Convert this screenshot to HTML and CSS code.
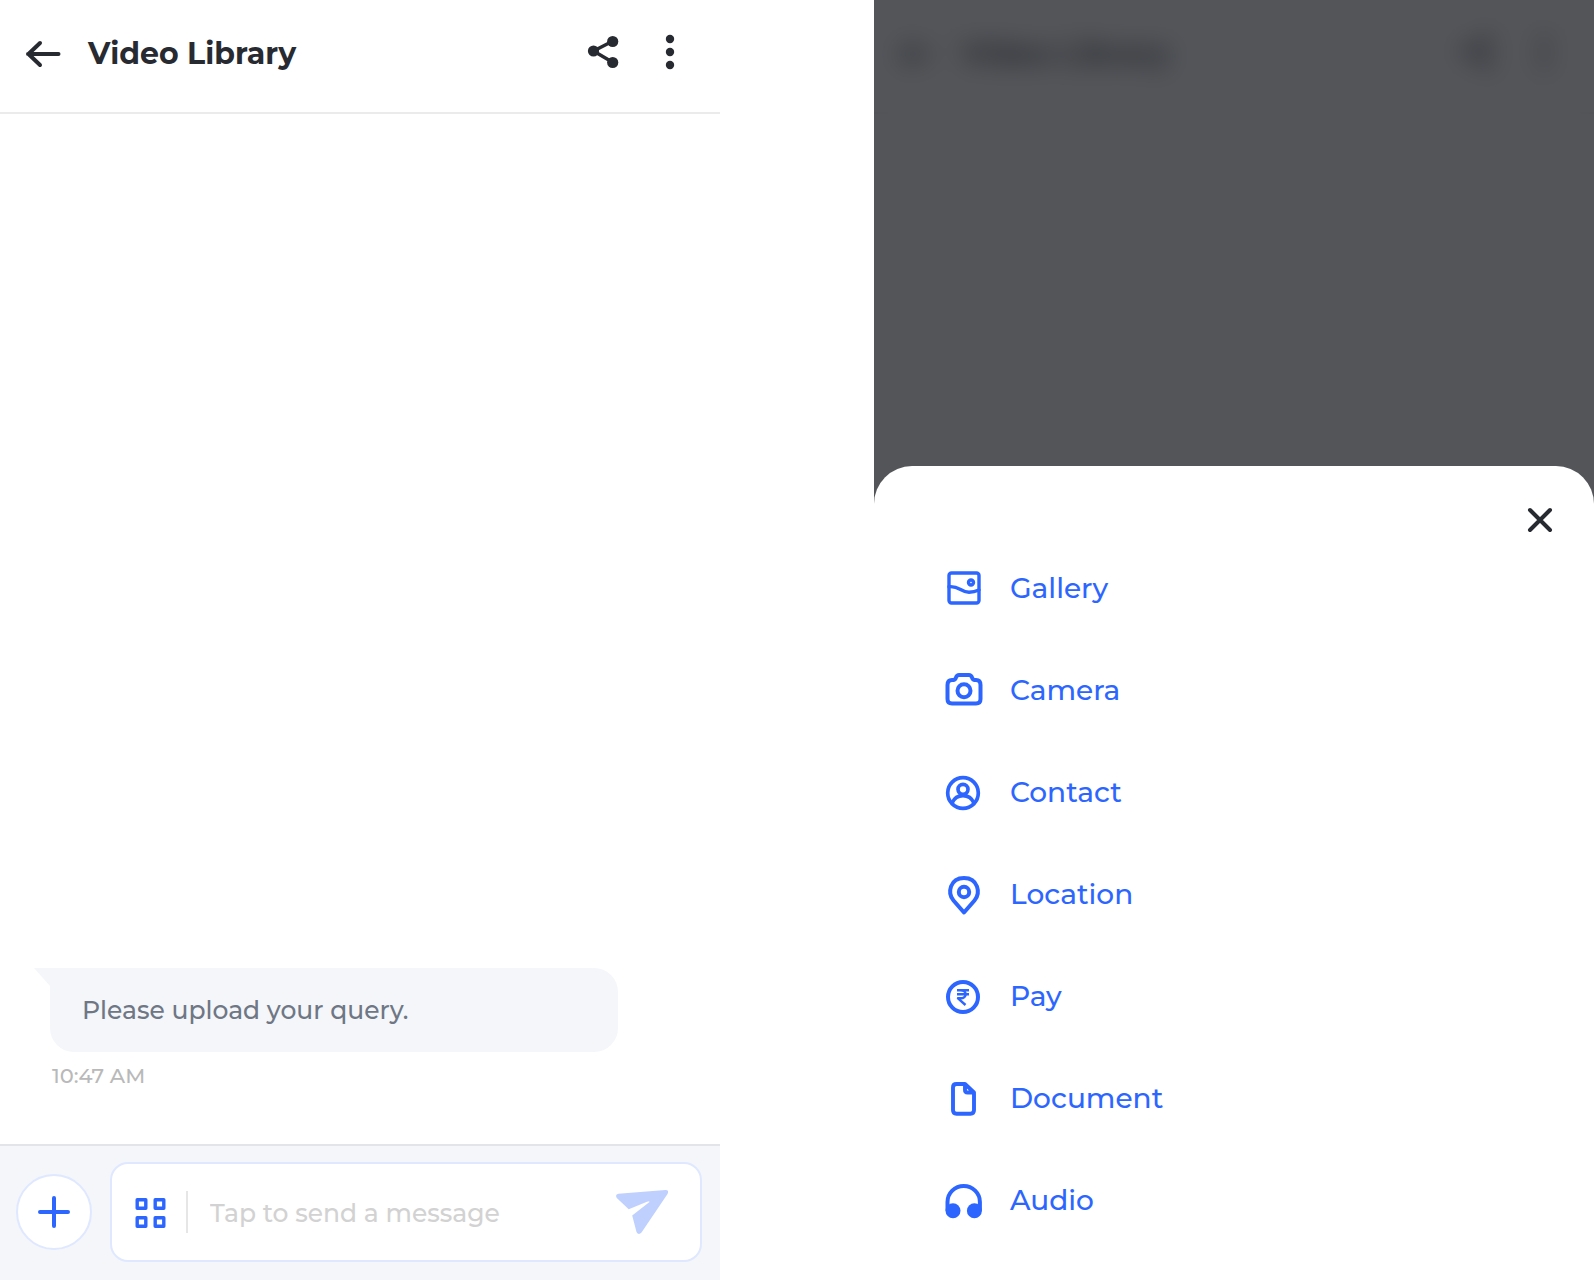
FILE: index.html
```html
<!DOCTYPE html>
<html lang="en">
<head>
  <meta charset="utf-8">
  <meta name="viewport" content="width=device-width, initial-scale=1">
  <title>Video Library</title>
  <link rel="stylesheet" href="styles.css">
</head>
<body>
  <main class="screens">
    <section class="screen chat" aria-label="Chat">
      <header class="topbar">
        <button class="icon-button" type="button" aria-label="Back">
          <svg class="icon" viewBox="0 0 40 40"><path d="M34.500 20H4M16 9L4.500 20L16 31" stroke-width="4"/></svg>
        </button>
        <h1 class="title">Video Library</h1>
        <div class="actions">
          <button class="icon-button" type="button" aria-label="Share">
            <svg class="icon" viewBox="0 0 40 40"><path d="M10.500 19L30 9M10.500 19L30 30.500" stroke-width="3.500"/><g class="solid"><circle cx="10.500" cy="19" r="5.600"/><circle cx="29.700" cy="9.500" r="5.600"/><circle cx="29.700" cy="30.500" r="5.600"/></g></svg>
          </button>
          <button class="icon-button" type="button" aria-label="More options">
            <svg class="icon" viewBox="0 0 40 40"><g class="solid"><circle cx="20" cy="7" r="4.200"/><circle cx="20" cy="20" r="4.200"/><circle cx="20" cy="33" r="4.200"/></g></svg>
          </button>
        </div>
      </header>

      <div class="messages">
        <article class="message">
          <p class="bubble">Please upload your query.</p>
          <time class="time" datetime="10:47">10:47 AM</time>
        </article>
      </div>

      <form class="composer">
        <button class="add" type="button" aria-label="Add attachment">
          <svg class="icon" viewBox="0 0 40 40"><path d="M20 6V34M6 20H34" stroke-width="4"/></svg>
        </button>
        <div class="field">
          <button class="icon-button accent" type="button" aria-label="Shortcuts">
            <svg class="icon" viewBox="0 0 40 40"><path d="M7.200 7.700h8.600v8.600h-8.600zM25.200 7.700h8.600v8.600h-8.600zM7.200 25.700h8.600v8.600h-8.600zM25.200 25.700h8.600v8.600h-8.600z" stroke-width="3.400"/></svg>
          </button>
          <input class="input" type="text" placeholder="Tap to send a message" aria-label="Message">
          <button class="send" type="submit" aria-label="Send">
            <svg viewBox="0 0 52 44"><path d="M2.500 3.700L49.500 0Q53.500 0 51.500 4L25.500 42.500Q22.500 45.500 20.500 42L16.200 25.500L33.500 12Q33.500 10.700 31 11.800L12.700 19.300L.8 8Q-1.300 4.500 2.500 3.700Z" fill="currentColor"/></svg>
          </button>
        </div>
      </form>
    </section>

    <section class="screen attach" aria-label="Attachments">
      <div class="topbar" aria-hidden="true">
        <span class="icon-button"><svg class="icon" viewBox="0 0 40 40"><path d="M34.500 20H4M16 9L4.500 20L16 31" stroke-width="4"/></svg></span>
        <span class="title">Video Library</span>
        <div class="actions">
          <span class="icon-button"><svg class="icon" viewBox="0 0 40 40"><path d="M10.500 19L30 9M10.500 19L30 30.500" stroke-width="3.500"/><g class="solid"><circle cx="10.500" cy="19" r="5.600"/><circle cx="29.700" cy="9.500" r="5.600"/><circle cx="29.700" cy="30.500" r="5.600"/></g></svg></span>
          <span class="icon-button"><svg class="icon" viewBox="0 0 40 40"><g class="solid"><circle cx="20" cy="7" r="4.200"/><circle cx="20" cy="20" r="4.200"/><circle cx="20" cy="33" r="4.200"/></g></svg></span>
        </div>
      </div>

      <div class="overlay">
        <div class="sheet" role="dialog" aria-label="Attach">
          <button class="close" type="button" aria-label="Close">
            <svg class="icon" viewBox="3 3 34 34"><path d="M10 10L30 30M30 10L10 30" stroke-width="4"/></svg>
          </button>
          <ul class="options">
            <li><button class="option" type="button">
              <svg class="icon" viewBox="0 0 40 40" stroke-width="3.400"><rect x="5" y="5" width="30" height="30" rx="2.500"/><circle cx="27" cy="14.500" r="2.500"/><path d="M5 18.700C15 17.500 17 24.300 25 24.300Q30 24.300 35 22"/></svg>
              Gallery</button></li>
            <li><button class="option" type="button">
              <svg class="icon" viewBox="0 0 40 40" stroke-width="4"><path d="M8 10H9.500Q11 10 12 7.500Q13 5 15 5H25Q27 5 28 7.500Q29 10 30.500 10H32Q36.500 10 36.500 15V29Q36.500 33.500 32 33.500H8Q3.500 33.500 3.500 29V15Q3.500 10 8 10Z"/><circle cx="20" cy="20.700" r="6.500"/></svg>
              Camera</button></li>
            <li><button class="option" type="button">
              <svg class="icon" viewBox="0 0 40 40" stroke-width="3.700"><circle cx="19" cy="21" r="15.300"/><circle cx="19" cy="17.300" r="5"/><path d="M8 31C12.500 21.200 25.500 21.200 30 31"/></svg>
              Contact</button></li>
            <li><button class="option" type="button">
              <svg class="icon" viewBox="0 0 40 40" stroke-width="4"><path d="M20 38.500L9.500 26.500C3 19 6 4 20 4S37 19 30.500 26.500Z"/><circle cx="20" cy="18" r="5.200"/></svg>
              Location</button></li>
            <li><button class="option" type="button">
              <svg class="icon" viewBox="0 0 40 40"><circle cx="19" cy="21" r="15" stroke-width="4"/><path class="square" d="M13 14.300H25M13 18.300H25M13 14.300H16.500C23.500 14.300 23.500 22.300 16.500 22.300H14L21.500 29" stroke-width="2.400"/></svg>
              Pay</button></li>
            <li><button class="option" type="button">
              <svg class="icon" viewBox="0 0 40 40" stroke-width="3.900"><path d="M12.500 6H21L30 14.500V32Q30 35.700 26.500 35.700H12.500Q9 35.700 9 32V9.500Q9 6 12.500 6ZM21 6.500V12Q21 14.500 23.500 14.500H29.500"/></svg>
              Document</button></li>
            <li><button class="option" type="button">
              <svg class="icon" viewBox="0 0 40 40"><path d="M3.500 30V22A16.200 16 0 0 1 35.900 22V30" stroke-width="4"/><g class="solid"><circle cx="9" cy="30.700" r="7.500"/><circle cx="30.400" cy="30.700" r="7.500"/></g></svg>
              Audio</button></li>
          </ul>
        </div>
      </div>
    </section>
  </main>
</body>
</html>
```
FILE: styles.css
```css
* {
  box-sizing: border-box;
}

body {
  margin: 0;
  background: #fff;
  color: #282a31;
  font-family: Montserrat, Inter, "Open Sans", sans-serif;
  font-weight: 500;
}

button,
input {
  margin: 0;
  padding: 0;
  border: 0;
  background: none;
  color: inherit;
  font: inherit;
}

button {
  cursor: pointer;
}

.screens {
  display: grid;
  grid-template-columns: 720fr 720fr;
  column-gap: 9.66%;
  min-height: 100vh;
}

.screen {
  min-width: 0;
}

.chat {
  display: flex;
  flex-direction: column;
}

.icon {
  display: block;
  flex: none;
  width: 40px;
  height: 40px;
  overflow: visible;
  fill: none;
  stroke: currentColor;
  stroke-linecap: round;
  stroke-linejoin: round;
}

.icon .solid {
  fill: currentColor;
  stroke: none;
}

.icon .square {
  stroke-linecap: butt;
}

.icon-button {
  flex: none;
  width: 40px;
  height: 40px;
}

.topbar {
  display: flex;
  align-items: center;
  height: 114px;
  padding: 0 30px 4px 24px;
  border-bottom: 2px solid #ebebeb;
}

.title {
  flex: 1;
  margin: 0 0 0 24px;
  font-size: 30px;
  font-weight: 700;
  line-height: 40px;
}

.actions {
  display: flex;
  gap: 27px;
  padding-bottom: 4px;
}

.messages {
  display: flex;
  flex: 1;
  flex-direction: column;
  justify-content: flex-end;
  padding: 0 102px 54px 50px;
}

.bubble {
  position: relative;
  margin: 0;
  padding: 24px 32px;
  border-radius: 0 24px 24px 24px;
  background: #f4f6fa;
  color: #6f7785;
  font-size: 25px;
  line-height: 36px;
}

.bubble::before {
  position: absolute;
  top: 0;
  right: 100%;
  width: 16px;
  height: 18px;
  background: #f4f6fa;
  clip-path: polygon(0 0, 100% 0, 100% 100%);
  content: "";
}

.time {
  display: block;
  margin: 10px 2px 0;
  color: #b9b9b9;
  font-size: 21px;
  line-height: 28px;
}

.composer {
  display: flex;
  align-items: center;
  gap: 18px;
  padding: 16px 18px 18px 16px;
  border-top: 2px solid #e2e4e9;
  background: #f4f6fa;
}

.add {
  display: grid;
  flex: none;
  place-items: center;
  width: 76px;
  height: 76px;
  border: 2px solid #dfe8ff;
  border-radius: 50%;
  background: #fff;
  color: #2d66ff;
}

.field {
  display: flex;
  flex: 1;
  align-items: center;
  min-width: 0;
  height: 100px;
  padding: 0 32px 0 18px;
  border: 2px solid #dfe8ff;
  border-radius: 18px;
  background: #fff;
}

.accent {
  color: #2d66ff;
}

.input {
  flex: 1;
  min-width: 0;
  height: 42px;
  margin-left: 16px;
  padding: 2px 0 0 22px;
  border-left: 2px solid #e6e6e6;
  outline: 0;
  font-size: 25px;
}

.input::placeholder {
  color: #d2d2d2;
  opacity: 1;
}

.send {
  flex: none;
  width: 52px;
  height: 44px;
  color: #bfd0ff;
}

.send svg {
  display: block;
}

.attach {
  display: grid;
}

.attach > * {
  grid-area: 1 / 1;
}

.attach .topbar {
  align-self: start;
}

.overlay {
  z-index: 1;
  display: flex;
  flex-direction: column;
  justify-content: flex-end;
  background: rgba(40, 42, 47, .8);
  -webkit-backdrop-filter: blur(12px);
  backdrop-filter: blur(12px);
}

.sheet {
  display: flex;
  flex-direction: column;
  padding: 37px 37px 29px;
  border-radius: 38px 38px 0 0;
  background: #fff;
}

.close {
  align-self: flex-end;
}

.close .icon {
  width: 34px;
  height: 34px;
}

.options {
  margin: 0;
  padding: 0 33px;
  list-style: none;
}

.option {
  display: flex;
  align-items: center;
  gap: 26px;
  height: 102px;
  color: #2d66ff;
  font-size: 28px;
}
```
